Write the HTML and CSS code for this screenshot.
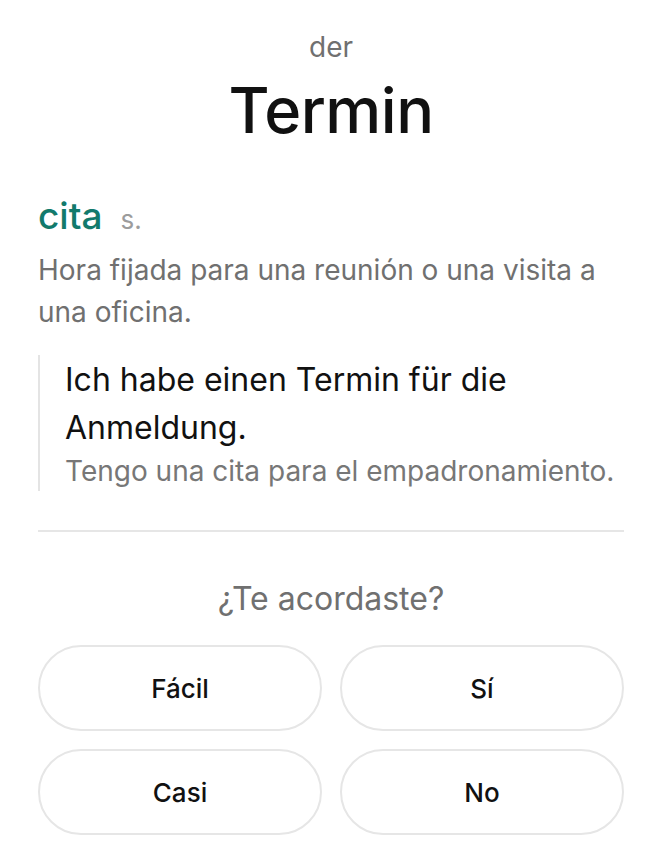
FILE: index.html
```html
<html>
    <head>
        <title>Termin</title>
        <meta charset="UTF-8">
        <meta name="viewport" content="width=device-width, initial-scale=1.0">
        <link rel="stylesheet" href="styles.css">
    </head>
    <body>
        <main class="card">
            <header class="headword">
                <div class="article">der</div>
                <h1 class="word">Termin</h1>
            </header>

            <section class="sense">
                <div class="sense-title">
                    <span class="translation">cita</span>
                    <span class="pos">s.</span>
                </div>
                <p class="definition">Hora fijada para una reunión o una visita a una oficina.</p>
                <blockquote class="example">
                    <p class="example-de">Ich habe einen Termin für die Anmeldung.</p>
                    <p class="example-es">Tengo una cita para el empadronamiento.</p>
                </blockquote>
            </section>

            <hr class="divider">

            <section class="review">
                <p class="question">¿Te acordaste?</p>
                <div class="answers">
                    <button class="answer">Fácil</button>
                    <button class="answer">Sí</button>
                    <button class="answer">Casi</button>
                    <button class="answer">No</button>
                </div>
            </section>
        </main>
    </body>
</html>
```

FILE: styles.css
```css
body {
    font-family: 'Inter', 'Noto Sans', sans-serif;
    margin: 0;
    padding: 0;
    background-color: #ffffff;
    color: #111111;
}
.card {
    padding: 32px 38px 24px;
}
.headword {
    text-align: center;
}
.article {
    font-size: 28px;
    line-height: 30px;
    color: #707070;
}
.word {
    font-size: 63px;
    font-weight: 500;
    line-height: 76px;
    margin: 10px 0 0 0;
    color: #111111;
    letter-spacing: -0.5px;
}
.sense {
    margin-top: 46px;
}
.sense-title {
    display: flex;
    align-items: baseline;
    gap: 18px;
    line-height: 44px;
}
.translation {
    font-size: 37px;
    font-weight: 500;
    color: #127a6c;
}
.pos {
    font-size: 26px;
    color: #9c9c9c;
}
.definition {
    font-size: 28px;
    line-height: 42px;
    color: #707070;
    margin: 7px 0 0 0;
}
.example {
    margin: 22px 0 0 0;
    padding: 1px 0 1px 25px;
    border-left: 2px solid #e4e4e4;
}
.example p {
    margin: 0;
}
.example-de {
    font-size: 32px;
    line-height: 48px;
    color: #111111;
}
.example-es {
    font-size: 28px;
    line-height: 38px;
    color: #777777;
}
.divider {
    border: none;
    border-top: 2px solid #e6e6e6;
    margin: 39px 0 0 0;
}
.review {
    margin-top: 48px;
}
.question {
    text-align: center;
    font-size: 32px;
    line-height: 38px;
    color: #707070;
    margin: 0;
}
.answers {
    display: grid;
    grid-template-columns: 1fr 1fr;
    gap: 18px;
    margin-top: 27px;
}
.answer {
    font-family: inherit;
    font-size: 26px;
    font-weight: 500;
    color: #111111;
    background-color: #ffffff;
    border: 2px solid #e6e6e6;
    border-radius: 43px;
    height: 86px;
    cursor: pointer;
}
```
